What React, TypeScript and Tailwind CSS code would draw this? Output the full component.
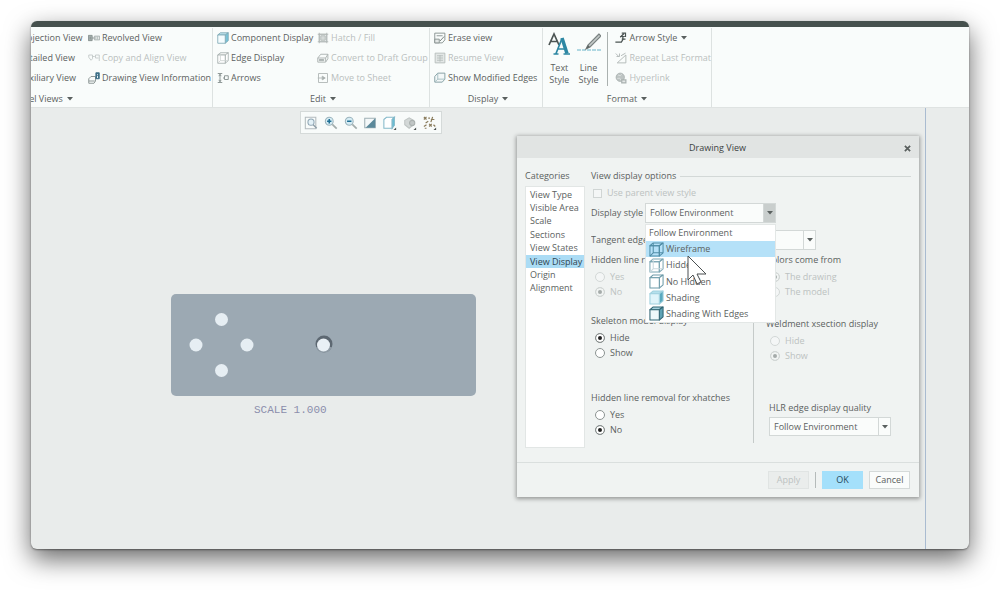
import type { ReactNode } from "react";

function Caret() {
  return (
    <svg viewBox="0 0 6 4" className="h-[4px] w-[6px] shrink-0" fill="#5a605f">
      <path d="M0 0h6L3 3.6z" />
    </svg>
  );
}

type CubeProps = { edge?: string; front?: string; side?: string; top?: string; hidden?: string; className?: string };

function Cube({ edge = "#7f9aa6", front = "#fff", side = "#fff", top = "#fff", hidden, className = "size-3" }: CubeProps) {
  return (
    <svg viewBox="0 0 16 16" className={`${className} shrink-0`} stroke={edge} strokeWidth="1.1" strokeLinejoin="round">
      <path d="M1 4 4.5 1H15l-4 3z" fill={top} />
      <path d="M11 4l4-3v10.500L11 15z" fill={side} />
      <path d="M1 4h10v11H1z" fill={front} />
      {hidden && <path d="M4.500 1v10.500H15M1 15l3.500-3.500" fill="none" stroke={hidden} />}
    </svg>
  );
}

function Icon({ children, className = "size-3" }: { children: ReactNode; className?: string }) {
  return (
    <svg viewBox="0 0 16 16" className={`${className} shrink-0`} fill="none" stroke="#858f8d" strokeWidth="1.200">
      {children}
    </svg>
  );
}

const icons = {
  revolved: (
    <Icon>
      <path d="M0.500 4.500h5v7h-5zM2 7h2M2 9h2" fill="#a9b2b0" />
      <path d="M5.500 8h3" />
      <path d="M8.500 5.500h7v5h-7zM10.500 6v4M13 6v4" stroke="#a3acaa" />
    </Icon>
  ),
  copyAlign: (
    <Icon>
      <g stroke="#c3c9c8">
        <path d="M1 4h5v5l-2 2-3-4z" />
        <path d="M6 6h3M10 4h5v8M10 4v4h4" />
      </g>
    </Icon>
  ),
  info: (
    <Icon>
      <path d="M1 9l3-3h6v6l-2 3H1zM1 12h8" />
      <path d="M10.500 1h4.500v8h-4.500z" fill="#3d6f88" stroke="#3d6f88" />
      <path d="M12.700 3v1M12.700 5v3" stroke="#fff" />
    </Icon>
  ),
  hatch: (
    <Icon>
      <g stroke="#b0b7b6">
        <path d="M3 3h10v10H3zM1 3h14M1 13h14M3 1v14M13 1v14" />
        <path d="M5 5h6v6H5z" fill="#d5dad9" />
      </g>
    </Icon>
  ),
  draft: (
    <Icon>
      <g stroke="#a9b0af">
        <path d="M1 8l4-5h9.500v6l-3 4.500H1zM1 8h10.500v5M11.500 8l3-5" />
        <path d="M3 10h6v1.500H3z" fill="#b9c0bf" />
      </g>
    </Icon>
  ),
  move: (
    <Icon>
      <g stroke="#b0b7b6">
        <path d="M2 2h12v12H2z" />
        <path d="M1 8h8M7 5.500v5L11 8z" fill="#9da5a3" />
      </g>
    </Icon>
  ),
  arrows: (
    <Icon>
      <path d="M1 2h6M1 14h6M4 3v10M2.500 5.500 4 3l1.500 2.500M2.500 10.500 4 13l1.500-2.500M10 5h5v5h-5zM8 8h2" />
    </Icon>
  ),
  erase: (
    <Icon>
      <path d="M1 1.500h13.500v9L11 14.500H1z" />
      <path d="M3.500 5h8M1 9.500h6v5H1z" fill="#e3e7e6" />
      <path d="M8 12l5.500-6" stroke="#6d7775" />
    </Icon>
  ),
  resume: (
    <Icon>
      <g stroke="#b6bdbb">
        <path d="M1.500 1.500h13v13h-13z" fill="#e3e7e6" />
        <path d="M4 5h8M4 8h8M4 11h8M8 4v9" />
      </g>
    </Icon>
  ),
  modified: (
    <Icon>
      <path d="M1 6l4-4.500h9.500v8l-3.500 4H1z" stroke="#7d9a9e" fill="#f3f8f8" />
      <path d="M1.500 13 5 9.500h9M5 2v7.500" stroke="#a3bcc0" />
    </Icon>
  ),
  arrowStyle: (
    <Icon>
      <path d="M0.500 13.500h8l2-3.500V6M7 7l5-5" stroke="#4b5453" strokeWidth="1.700" />
      <path d="M9 1.500h5v5M7 6h6M9 9.500h5" stroke="#4b5453" strokeWidth="1.600" />
    </Icon>
  ),
  repeat: (
    <Icon>
      <g stroke="#b0b7b6">
        <path d="M3 14.500 14.500 4v10.500zM1 2l4 4M6 2v4H2M8 5l6-3.500" />
      </g>
    </Icon>
  ),
  link: (
    <Icon>
      <g stroke="#a9b1b0">
        <circle cx="7" cy="7" r="5.500" fill="#bdc4c3" />
        <path d="M4 4l3 1 2-2M3 9l3-1 2 3" stroke="#dde1e0" />
        <path d="M9 10.500h5.500v4H9z" fill="#e3e7e6" strokeWidth="1.600" />
      </g>
    </Icon>
  ),
};

function Tool({ icon, label, off, caret }: { icon?: ReactNode; label: string; off?: boolean; caret?: boolean }) {
  return (
    <button
      type="button"
      disabled={off}
      className="flex h-5 items-center gap-0.5 whitespace-nowrap disabled:text-[#b9bfbe]"
    >
      {icon}
      {label}
      {caret && (
        <span className="ml-0.5">
          <Caret />
        </span>
      )}
    </button>
  );
}

function Group({ title, className, children }: { title: string; className: string; children: ReactNode }) {
  return (
    <section className={`${className} flex shrink-0 flex-col border-r border-[#dde2e1]`}>
      <div className="flex h-[61px]">{children}</div>
      <button type="button" className="flex h-[18px] items-center justify-center gap-1 pt-0.5 whitespace-nowrap">
        {title}
        <Caret />
      </button>
    </section>
  );
}

function Ribbon() {
  return (
    <header className="flex h-[81px] border-b border-[#dfe3e2] bg-[#f9fcfb] pt-px">
      <div className="flex w-[182px] shrink-0 justify-end overflow-hidden">
        <Group title="Model Views" className="w-[240px] pr-[102px]">
          <div className="-mr-[102px] ml-auto flex shrink-0">
            <div className="w-[70px]">
              <Tool label="Projection View" />
              <Tool label="Detailed View" />
              <Tool label="Auxiliary View" />
            </div>
            <div className="w-[124px]">
              <Tool icon={icons.revolved} label="Revolved View" />
              <Tool icon={icons.copyAlign} label="Copy and Align View" off />
              <Tool icon={icons.info} label="Drawing View Information" />
            </div>
          </div>
        </Group>
      </div>
      <Group title="Edit" className="w-[217px] pl-1">
        <div className="w-[100px]">
          <Tool icon={<Cube front="#f4fcfe" side="#79c3d8" top="#bfe3ee" edge="#7da7b4" />} label="Component Display" />
          <Tool icon={<Cube edge="#a3acab" hidden="#ccd2d1" />} label="Edge Display" />
          <Tool icon={icons.arrows} label="Arrows" />
        </div>
        <div>
          <Tool icon={icons.hatch} label="Hatch / Fill" off />
          <Tool icon={icons.draft} label="Convert to Draft Group" off />
          <Tool icon={icons.move} label="Move to Sheet" off />
        </div>
      </Group>
      <Group title="Display" className="w-[113px] pl-1">
        <div>
          <Tool icon={icons.erase} label="Erase view" />
          <Tool icon={icons.resume} label="Resume View" off />
          <Tool icon={icons.modified} label="Show Modified Edges" />
        </div>
      </Group>
      <Group title="Format" className="w-[169px]">
        <button type="button" className="flex w-[33px] flex-col items-center pt-1 leading-3">
          <svg viewBox="0 0 24 24" className="mb-1.5 size-6" fill="none">
            <path d="M2 13 7 2l5 11M4 9.500h6" stroke="#4d5554" strokeWidth="1.700" />
            <path d="M9 21.500 15 6.500M11 17h8M6.500 22h5M16.500 22H23" stroke="#2d87a3" strokeWidth="1.700" />
            <path d="M15 6l5 15.500" stroke="#2d87a3" strokeWidth="3.500" />
          </svg>
          <span>Text</span>
          <span>Style</span>
        </button>
        <button type="button" className="flex w-[26px] flex-col items-center pt-1 leading-3">
          <svg viewBox="0 0 24 24" className="mb-1.5 size-6" fill="none">
            <path d="M0 18h24" stroke="#69b3c9" strokeWidth="1.200" strokeDasharray="4 1" />
            <path d="M22 2 11 13l-2 4 4-2L24 4z" fill="#c4cac9" stroke="#7b8382" strokeWidth="1.200" />
            <path d="M9 17l2-4 2 2z" fill="#5c6463" />
          </svg>
          <span>Line</span>
          <span>Style</span>
        </button>
        <div className="mt-1 mr-[7px] ml-1.5 h-[54px] border-l border-[#aab1af]" />
        <div>
          <Tool icon={icons.arrowStyle} label="Arrow Style" caret />
          <Tool icon={icons.repeat} label="Repeat Last Format" off />
          <Tool icon={icons.link} label="Hyperlink" off />
        </div>
      </Group>
    </header>
  );
}

function Magnifier({ sign }: { sign: string }) {
  return (
    <Icon className="size-3.5">
      <circle cx="6" cy="6" r="4.500" fill="#d5ecf4" stroke="#9db5be" />
      <path d="M9.500 9.500l5 5" stroke="#a3adac" strokeWidth="2" />
      <path d={sign} stroke="#1f6f94" strokeWidth="1.800" />
    </Icon>
  );
}

function Corner() {
  return <path d="M15 13v3h-3z" fill="#4a504f" stroke="none" />;
}

function ViewToolbar() {
  const tools: [string, ReactNode][] = [
    [
      "Refit",
      <Icon className="size-3.5">
        <path d="M1.500 1.500h12v13h-12z" stroke="#b3bbbe" />
        <circle cx="8" cy="7" r="3.500" fill="#e3f1f7" stroke="#8fa5b3" />
        <path d="M10.500 10l4 4" stroke="#8f9fa8" strokeWidth="1.600" />
      </Icon>,
    ],
    ["Zoom in", <Magnifier sign="M3.500 6h5M6 3.500v5" />],
    ["Zoom out", <Magnifier sign="M3.500 6h5" />],
    [
      "Repaint",
      <Icon className="size-3.5">
        <path d="M2 2.500h12v11H2z" fill="#f4f8f9" stroke="#9fb0b5" />
        <path d="M14 2.500v11H3z" fill="#5b899a" stroke="none" />
      </Icon>,
    ],
    [
      "Display style",
      <Icon className="size-3.5">
        <path d="M1 4l3-2.500h9L10.500 4v10H1z" fill="#fff" stroke="#84b9c9" />
        <path d="M10.500 4 13 1.500v9L10.500 14z" fill="#64bfd7" stroke="#84b9c9" />
        <Corner />
      </Icon>,
    ],
    [
      "Perspective",
      <Icon className="size-3.5">
        <path d="M2 5l5-3 5 3v5l-5 4-5-4z" fill="#d3d8d7" stroke="#bfc5c4" />
        <circle cx="10.500" cy="8" r="3" fill="#c0c6c5" stroke="#aab1af" />
        <Corner />
      </Icon>,
    ],
    [
      "Datum display",
      <Icon className="size-3.5">
        <path
          d="M1 1l3 3M4 1 1 4M6 2.500h2M11 1l-2 6M9 4h4M3 8l3-2M7 9l3 3M10 9l-3 3M1 12l3-2M2 14h2M12 10l2 2"
          stroke="#8a7c5c"
          strokeWidth="1.400"
        />
        <Corner />
      </Icon>,
    ],
  ];
  return (
    <div className="absolute top-[3px] left-[269px] flex h-[23px] w-[142px] items-center justify-between border border-[#d5dad9] bg-[#f8fbfa] pr-1 pl-[3px]">
      {tools.map(([name, icon]) => (
        <button key={name} type="button" aria-label={name}>
          {icon}
        </button>
      ))}
    </div>
  );
}

function Plate() {
  return (
    <figure className="absolute top-[186px] left-[140px] w-[305px]">
      <svg viewBox="0 0 305 102" className="block w-full">
        <rect width="305" height="102" rx="5" fill="#9ca9b3" />
        <g fill="#e6eef3">
          <circle cx="50.500" cy="25.500" r="6.500" />
          <circle cx="25" cy="51" r="6.500" />
          <circle cx="76" cy="51" r="6.500" />
          <circle cx="50.500" cy="76.500" r="6.500" />
        </g>
        <circle cx="153" cy="50" r="8.500" fill="#5d6872" />
        <path d="M145 53a8.500 8.500 0 0 0 16 0z" fill="#8f9ba5" />
        <circle cx="152.500" cy="51" r="6.500" fill="#e9f0f5" />
      </svg>
      <figcaption className="mt-1.5 ml-[83px] font-['Liberation_Mono',monospace] text-[11px] leading-4 text-[#8b8eab]">
        SCALE 1.000
      </figcaption>
    </figure>
  );
}

type ComboProps = { id: string; className: string; value: string; open?: boolean };

function Combo({ id, className, value, open }: ComboProps) {
  return (
    <div className={`${className} relative flex border border-[#d3d8d7] bg-[#fafcfb]`}>
      <select id={id} className="w-full appearance-none pl-1 outline-none">
        <option>{value}</option>
      </select>
      <span
        className={`pointer-events-none absolute inset-y-0 right-0 flex w-3 items-center justify-center border-l border-[#d3d8d7] ${open ? "bg-[#c9cecd]" : "bg-[#fafcfb]"}`}
      >
        <Caret />
      </span>
    </div>
  );
}

function Choice({ name, label, checked, off }: { name: string; label: string; checked?: boolean; off?: boolean }) {
  return (
    <label className={`flex h-[15px] items-center gap-[5px] pl-1 ${off ? "text-[#bcc2c1]" : ""}`}>
      <input
        type="radio"
        name={name}
        defaultChecked={checked}
        disabled={off}
        className="size-2.5 appearance-none rounded-full border border-[#8c9392] bg-white checked:bg-[#222] checked:shadow-[inset_0_0_0_2px_#fff] disabled:border-[#d3d8d7] disabled:bg-[#f4f6f6] disabled:checked:bg-[#a5abaa] disabled:checked:shadow-[inset_0_0_0_2px_#f1f4f3]"
      />
      {label}
    </label>
  );
}

function Choices({ title, className, name, options, picked, off }: {
  title: string;
  className: string;
  name: string;
  options: string[];
  picked: string;
  off?: boolean;
}) {
  return (
    <fieldset className={className}>
      <legend className="mb-[3px] h-3 whitespace-nowrap">{title}</legend>
      {options.map((o) => (
        <Choice key={o} name={name} label={o} checked={o === picked} off={off} />
      ))}
    </fieldset>
  );
}

const categories = ["View Type", "Visible Area", "Scale", "Sections", "View States", "View Display", "Origin", "Alignment"];

const styles: [string, ReactNode][] = [
  ["Wireframe", <Cube className="size-[15px]" edge="#4f8da6" front="none" side="none" top="none" hidden="#4f8da6" />],
  ["Hidden", <Cube className="size-[15px]" edge="#7ba5b2" hidden="#c9d8dd" front="none" side="none" top="none" />],
  ["No Hidden", <Cube className="size-[15px]" edge="#6c9aa8" />],
  ["Shading", <Cube className="size-[15px]" edge="#9fd0de" front="#e0f4fa" side="#5aa9bf" top="#b5e0ec" />],
  ["Shading With Edges", <Cube className="size-[15px]" edge="#2f6473" front="#eef8fa" side="#5fa3b5" top="#a5d0dc" />],
];

function StyleMenu() {
  return (
    <ul
      role="listbox"
      className="absolute top-[54px] left-[54px] z-10 grid h-[99px] w-[131px] auto-rows-fr border border-[#e3e7e6] bg-white"
    >
      <li role="option" aria-selected="false" className="flex items-center pl-[3px]">
        Follow Environment
      </li>
      {styles.map(([label, icon]) => (
        <li
          key={label}
          role="option"
          aria-selected={label === "Wireframe"}
          className="flex items-center gap-0.5 pl-[3px] aria-selected:bg-[#b5e1f8]"
        >
          {icon}
          {label}
        </li>
      ))}
    </ul>
  );
}

function Pointer() {
  return (
    <svg viewBox="0 0 20 30" className="absolute top-[97px] left-[170px] z-20 h-[30px] w-5">
      <path d="M1 1v24l5-5 4 9 4-2-4-8h9z" fill="#fff" stroke="#4a4f50" strokeWidth="1" />
    </svg>
  );
}

function Dialog() {
  return (
    <div
      role="dialog"
      aria-label="Drawing View"
      className="absolute top-[28px] right-[50px] w-[402px] bg-[#f0f3f2] shadow-[0_1px_4px_1px_rgba(0,0,0,0.35)]"
    >
      <div className="flex h-[22px] items-center bg-[#e1e4e3] px-2 pt-0.5">
        <h2 className="flex-1 pl-1.5 text-center text-[#3c4241]">Drawing View</h2>
        <button type="button" aria-label="Close">
          <svg viewBox="0 0 8 8" className="size-[7px]" stroke="#5a605f" strokeWidth="2">
            <path d="M1 1l6 6M7 1 1 7" />
          </svg>
        </button>
      </div>
      <div className="relative flex gap-1.5 px-2 pt-3 pb-3.5">
        <div className="w-[60px]">
          <h3 className="h-3 leading-3">Categories</h3>
          <div className="mt-1 h-[262px] border border-[#e2e6e5] bg-white pt-px">
            <ul className="grid h-[107px] auto-rows-fr">
              {categories.map((c) => (
                <li
                  key={c}
                  aria-current={c === "View Display"}
                  className="flex items-center pl-1 whitespace-nowrap aria-[current=true]:bg-[#abdcf5] aria-[current=true]:text-[#2f4450]"
                >
                  {c}
                </li>
              ))}
            </ul>
          </div>
        </div>
        <div className="relative flex-1">
          <div className="flex h-3 items-center gap-1 leading-3">
            <h3>View display options</h3>
            <div className="h-px flex-1 bg-[#d3d8d7]" />
          </div>
          <label className="mt-[5px] flex h-3 items-center gap-[5px] pl-0.5 text-[#bcc2c1]">
            <input type="checkbox" disabled className="size-[9px] appearance-none border border-[#d0d5d4] bg-[#f4f6f6]" />
            Use parent view style
          </label>
          <div className="mt-1 flex h-5 items-center">
            <label htmlFor="display-style" className="w-[54px] whitespace-nowrap">
              Display style
            </label>
            <Combo id="display-style" className="h-5 w-[131px]" value="Follow Environment" open />
          </div>
          <div className="mt-[7px] flex h-5 items-center">
            <label htmlFor="tangent-style" className="w-[100px] overflow-hidden whitespace-nowrap">
              Tangent edges style
            </label>
            <Combo id="tangent-style" className="h-5 w-[125px]" value="Default" />
          </div>
          <div className="flex h-[193px]">
            <div className="w-[163px] border-r border-[#c5cac9] pt-1 leading-3">
              <Choices title="Hidden line removal for quilts" className="" name="quilts" options={["Yes", "No"]} picked="No" off />
              <Choices title="Skeleton model display" className="mt-4" name="skeleton" options={["Hide", "Show"]} picked="Hide" />
              <Choices title="Hidden line removal for xhatches" className="mt-8" name="xhatch" options={["Yes", "No"]} picked="No" />
            </div>
            <div className="flex-1 pt-1 pl-3 leading-3">
              <Choices title="Colors come from" className="" name="colors" options={["The drawing", "The model"]} picked="The drawing" off />
              <Choices title="Weldment xsection display" className="mt-[19px]" name="weldment" options={["Hide", "Show"]} picked="Show" off />
              <div className="mt-[39px] pl-[3px]">
                <label htmlFor="hlr" className="mb-[3px] block h-3 whitespace-nowrap">
                  HLR edge display quality
                </label>
                <Combo id="hlr" className="h-[19px] w-[122px]" value="Follow Environment" />
              </div>
            </div>
          </div>
          <StyleMenu />
        </div>
        <Pointer />
      </div>
      <div className="flex items-center justify-end gap-1.5 border-t border-[#dadfde] px-[9px] py-2">
        <button type="button" disabled className="h-[18px] w-[41px] border border-[#e0e4e3] bg-[#eaedec] text-[#bcc2c1]">
          Apply
        </button>
        <div className="h-4 border-l border-[#b5bbba]" />
        <button type="button" className="h-[18px] w-[41px] bg-[#a4e0fb] text-[#24485a]">
          OK
        </button>
        <button type="button" className="h-[18px] w-[41px] border border-[#d5dad9] bg-[#fafcfb]">
          Cancel
        </button>
      </div>
    </div>
  );
}

export default function App() {
  return (
    <div className="flex min-h-screen bg-white px-[31px] pt-[21px] pb-[41px] font-['Open_Sans','Noto_Sans',sans-serif] text-[9px] leading-3 text-[#5b6160]">
      <div className="flex min-w-0 flex-1 flex-col overflow-hidden rounded-md bg-[#e9eceb] shadow-[0_10px_26px_rgba(0,0,0,0.6),0_1px_2px_rgba(0,0,0,0.4)]">
        <div className="h-1.5 bg-[#46514e]" />
        <Ribbon />
        <main className="relative min-h-[440px] flex-1">
          <div className="absolute inset-y-0 right-[43px] w-px bg-[#a9bbd0]" />
          <ViewToolbar />
          <Plate />
          <Dialog />
        </main>
      </div>
    </div>
  );
}
